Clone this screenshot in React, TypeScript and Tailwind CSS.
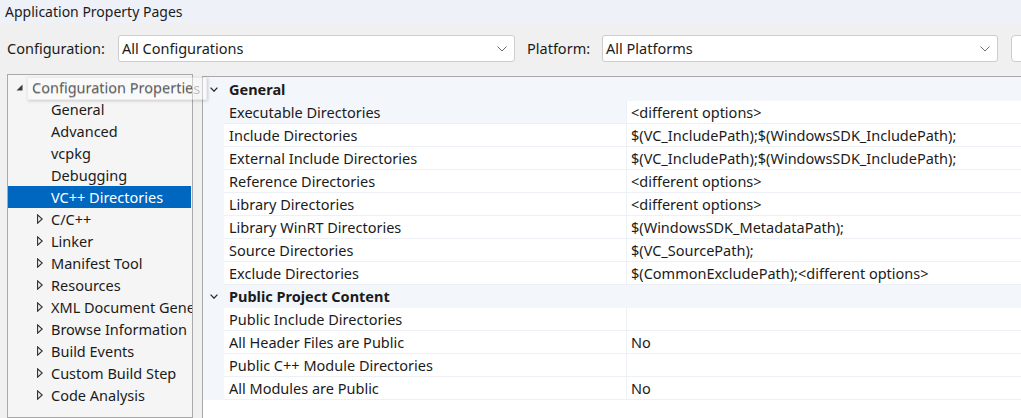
import React from "react";

const treeItems: { label: string; expandable: boolean; selected?: boolean }[] = [
  { label: "General", expandable: false },
  { label: "Advanced", expandable: false },
  { label: "vcpkg", expandable: false },
  { label: "Debugging", expandable: false },
  { label: "VC++ Directories", expandable: false, selected: true },
  { label: "C/C++", expandable: true },
  { label: "Linker", expandable: true },
  { label: "Manifest Tool", expandable: true },
  { label: "Resources", expandable: true },
  { label: "XML Document Generator", expandable: true },
  { label: "Browse Information", expandable: true },
  { label: "Build Events", expandable: true },
  { label: "Custom Build Step", expandable: true },
  { label: "Code Analysis", expandable: true },
];

const general: [string, string][] = [
  ["Executable Directories", "<different options>"],
  ["Include Directories", "$(VC_IncludePath);$(WindowsSDK_IncludePath);"],
  ["External Include Directories", "$(VC_IncludePath);$(WindowsSDK_IncludePath);"],
  ["Reference Directories", "<different options>"],
  ["Library Directories", "<different options>"],
  ["Library WinRT Directories", "$(WindowsSDK_MetadataPath);"],
  ["Source Directories", "$(VC_SourcePath);"],
  ["Exclude Directories", "$(CommonExcludePath);<different options>"],
];

const publicContent: [string, string][] = [
  ["Public Include Directories", ""],
  ["All Header Files are Public", "No"],
  ["Public C++ Module Directories", ""],
  ["All Modules are Public", "No"],
];

function ComboChevron() {
  return (
    <svg width="10" height="6" viewBox="0 0 10 6" className="shrink-0">
      <polyline points="0.5,0.5 5,5 9.5,0.5" fill="none" stroke="#6b6b6b" strokeWidth="1" />
    </svg>
  );
}

function Combo({ value, width }: { value: string; width: string }) {
  return (
    <div
      className={`${width} h-[27px] shrink-0 bg-white border border-[#cdcdcd] rounded-[3px] flex items-center pl-[3px] pr-[7px] justify-between`}
    >
      <span className="text-[14.5px] leading-none">{value}</span>
      <ComboChevron />
    </div>
  );
}

function GroupChevron() {
  return (
    <svg width="8" height="5" viewBox="0 0 8 5" className="shrink-0">
      <polyline points="0.6,0.6 4,4.2 7.4,0.6" fill="none" stroke="#2b2b2b" strokeWidth="1.3" />
    </svg>
  );
}

function GroupHeader({ label, h }: { label: string; h: string }) {
  return (
    <div className={`${h} bg-[#f3f6fb] flex items-center`}>
      <div className="w-[26px] shrink-0 pl-[7px] flex items-center">
        <GroupChevron />
      </div>
      <span className="font-bold text-[14.5px] leading-none">{label}</span>
    </div>
  );
}

function PropRow({ name, value, nameShaded }: { name: string; value: string; nameShaded?: boolean }) {
  return (
    <div className="h-[23px] flex">
      <div className="w-[21px] shrink-0 bg-[#f3f6fb]" />
      <div className="flex-1 flex border-b border-[#edf1f6] bg-white">
        <div
          className={`w-[402px] shrink-0 pl-[5px] flex items-center text-[14.5px] leading-none ${
            nameShaded ? "bg-[#f3f6fb]" : ""
          }`}
        >
          {name}
        </div>
        <div className="flex-1 border-l border-[#edf1f6] pl-[4px] flex items-center text-[14.5px] leading-none whitespace-nowrap">
          {value}
        </div>
      </div>
    </div>
  );
}

export default function App() {
  return (
    <div className="w-[1021px] h-[418px] overflow-hidden relative bg-[#f0f0f0] font-['Noto_Sans',sans-serif] text-[#1b1b1b]">
      {/* Title bar */}
      <div className="h-[23px] bg-[#eef2f8] pl-[5px] flex items-center text-[14px] leading-none">
        Application Property Pages
      </div>

      {/* Toolbar */}
      <div className="h-[51px] flex items-center pl-[7px]">
        <div className="w-[111px] shrink-0 text-[14.5px] leading-none">Configuration:</div>
        <Combo value="All Configurations" width="w-[397px]" />
        <div className="w-[75px] shrink-0 ml-[12px] text-[14.5px] leading-none">Platform:</div>
        <Combo value="All Platforms" width="w-[396px]" />
        <div className="ml-[13px] w-[60px] h-[27px] shrink-0 bg-white border border-[#cdcdcd] rounded-[4px]" />
      </div>

      {/* Body */}
      <div className="flex pl-[7px] h-[344px]">
        {/* Tree */}
        <div className="w-[186px] shrink-0 border border-[#a9a9a9] bg-[#f5f5f5] overflow-hidden pt-[1px] text-[14.5px] leading-none">
          <div className="h-[22px] flex items-center whitespace-nowrap">
            <div className="w-[24px] shrink-0 pl-[8px] flex items-center">
              <svg width="7" height="7" viewBox="0 0 7 7">
                <polygon points="6.5,0.5 6.5,6.5 0.5,6.5" fill="#3c3c3c" />
              </svg>
            </div>
            <span>Configuration Properties</span>
          </div>
          {treeItems.map((it) => (
            <div
              key={it.label}
              className={`h-[22px] mr-[1px] flex items-center whitespace-nowrap ${
                it.selected ? "bg-[#0067c0] text-white" : ""
              }`}
            >
              <div className="w-[43px] shrink-0 pl-[29px] flex items-center">
                {it.expandable && (
                  <svg width="6" height="10" viewBox="0 0 6 10">
                    <polygon points="0.6,0.8 5.2,5 0.6,9.2" fill="none" stroke="#2e2e2e" strokeWidth="1.1" />
                  </svg>
                )}
              </div>
              <span>{it.label}</span>
            </div>
          ))}
        </div>

        {/* Property grid */}
        <div className="flex-1 ml-[9px] mt-[2px] border-l border-t border-[#a9a9a9] bg-white overflow-hidden">
          <GroupHeader label="General" h="h-[24px]" />
          {general.map(([n, v], i) => (
            <PropRow key={n} name={n} value={v} nameShaded={i === 0} />
          ))}
          <GroupHeader label="Public Project Content" h="h-[23px]" />
          {publicContent.map(([n, v]) => (
            <PropRow key={n} name={n} value={v} />
          ))}
        </div>
      </div>

      {/* Tooltip overlay showing full tree item text */}
      <div className="absolute left-[27px] top-[77px] w-[180px] h-[23px] bg-white/40 border border-black/5 shadow-[1px_1px_3px_rgba(0,0,0,0.18)] flex items-center pl-[4px] text-[14.5px] leading-none text-black/25 whitespace-nowrap">
        Configuration Properties
      </div>
    </div>
  );
}
